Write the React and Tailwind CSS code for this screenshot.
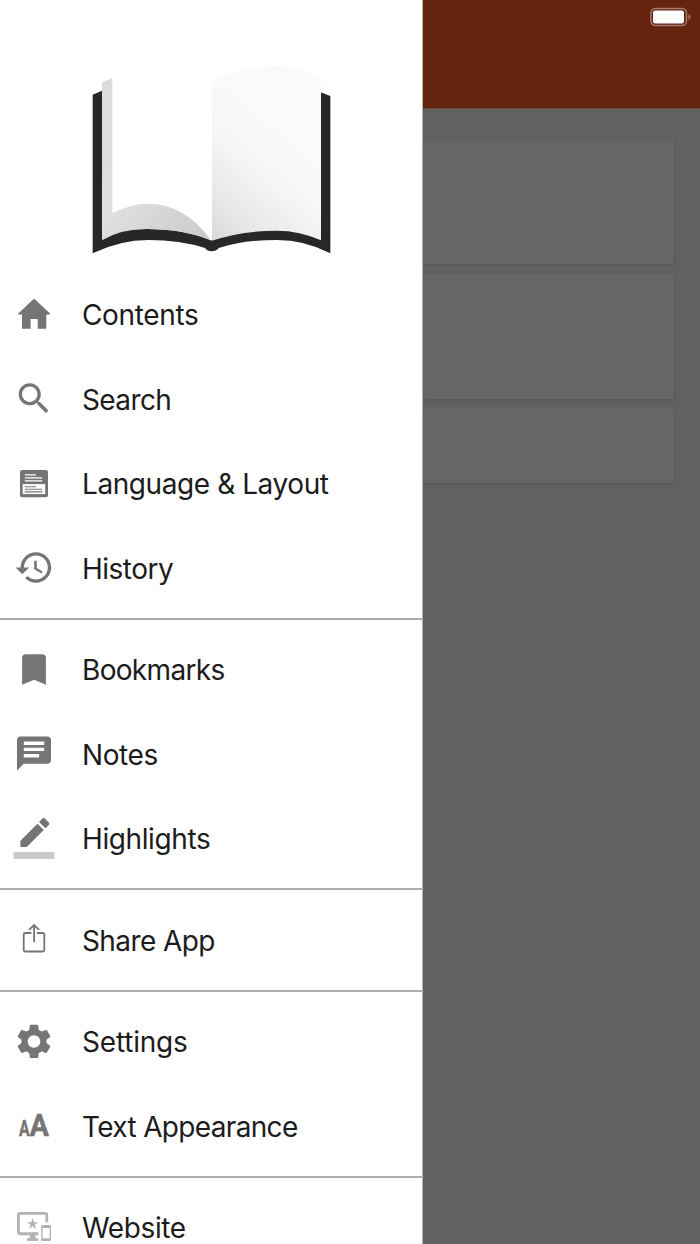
const GRAY = '#757575'

function Icon({ children, fill = GRAY }) {
  return (
    <svg viewBox="-24 -23.5 48 48" fill={fill} className="h-12 w-12 shrink-0">
      {children}
    </svg>
  )
}

function Glyph({ d, fill, transform = 'translate(-20.4 -20.4) scale(1.7)' }) {
  return (
    <Icon fill={fill}>
      <path d={d} transform={transform} />
    </Icon>
  )
}

const icons = {
  home: <Glyph transform="" d="M0.1-15.4Q.8-15.4 1.4-14.8L16.3-.8Q16.5 0 15.4 0H12.3V14.2H3.7V4.6H-3.4V14.2H-12V0H-15.2Q-16.3 0-16-.8L-1.2-14.8Q-.6-15.4 .1-15.4z" />,
  search: (
    <Glyph d="M15.5 14h-.79l-.28-.27C15.41 12.59 16 11.11 16 9.5 16 5.91 13.09 3 9.5 3S3 5.91 3 9.5 5.91 16 9.5 16c1.61 0 3.09-.59 4.23-1.57l.27.28v.79l5 4.99L20.49 19l-4.99-5zm-6 0C7.01 14 5 11.99 5 9.5S7.01 5 9.5 5 14 7.01 14 9.5 11.99 14 9.5 14z" />
  ),
  layout: (
    <Icon>
      <rect x="-14" y="-13.5" width="28" height="27.2" rx="2" />
      <path d="M-11.3.6H11.2V10.6H-11.3z" fill="#fff" />
      <path d="M-9.2-8.7H2M-9.2-5.7H8.2M-9.2-2.7H8.2" stroke="#fff" strokeWidth="1.3" />
      <path d="M-9.2 3.2H2M-9.2 5.8H8.2M-9.2 8.4H8.2" stroke={GRAY} strokeWidth="1.1" />
    </Icon>
  ),
  history: (
    <Glyph
      transform="translate(-20.2 -20.4) scale(1.7)"
      d="M13 3c-4.97 0-9 4.03-9 9H1l3.89 3.89.07.14L9 12H6c0-3.87 3.13-7 7-7s7 3.13 7 7-3.13 7-7 7c-1.93 0-3.68-.79-4.94-2.06l-1.42 1.42C8.27 19.99 10.51 21 13 21c4.97 0 9-4.03 9-9s-4.03-9-9-9zm-1 5v5l4.28 2.54.72-1.21-3.5-2.08V8H12z"
    />
  ),
  bookmark: <Glyph d="M17 3H7c-1.1 0-2 .9-2 2v16l7-3 7 3V5c0-1.1-.9-2-2-2z" />,
  notes: <Glyph d="M20 2H4c-1.1 0-1.99.9-1.99 2L2 22l4-4h14c1.1 0 2-.9 2-2V4c0-1.1-.9-2-2-2zM6 8.6h12v2H6v-2zm9 5.7H6v-2h9v2zm3-7.3H6V5h12v2z" />,
  highlight: (
    <Icon>
      <g transform="translate(-20.4 -20.4) scale(1.7)">
        <path d="M17.75 7L14 3.25l-10 10V17h3.75l10-10zm2.96-2.96c.39-.39.39-1.02 0-1.41L18.37.29c-.39-.39-1.02-.39-1.41 0L15 2.25 18.75 6l1.96-1.96z" />
        <path d="M0 20h24v4H0z" fill="#cacaca" />
      </g>
    </Icon>
  ),
  share: (
    <Icon fill="none">
      <path
        d="M-2.6-6.5H-8.8Q-10.3-6.5-10.3-5V10.5Q-10.3 12-8.8 12H8.8Q10.3 12 10.3 10.5V-5Q10.3-6.5 8.8-6.5H2.9M.1 2.8V-14.2M-5-9.6L.1-14.5L5.2-9.6"
        stroke={GRAY}
        strokeWidth="1.8"
      />
    </Icon>
  ),
  settings: (
    <Glyph
      transform="translate(-21 -20.8) scale(1.75 1.73)"
      d="M19.14 12.94c.04-.3.06-.61.06-.94 0-.32-.02-.64-.07-.94l2.03-1.58c.18-.14.23-.41.12-.61l-1.92-3.32c-.12-.22-.37-.29-.59-.22l-2.39.96c-.5-.38-1.03-.7-1.62-.94l-.36-2.54c-.04-.24-.24-.41-.48-.41h-3.84c-.24 0-.43.17-.47.41l-.36 2.54c-.59.24-1.13.57-1.62.94l-2.39-.96c-.22-.08-.47 0-.59.22L2.74 8.87c-.12.21-.08.47.12.61l2.03 1.58c-.05.3-.09.63-.09.94s.02.64.07.94l-2.03 1.58c-.18.14-.23.41-.12.61l1.92 3.32c.12.22.37.29.59.22l2.39-.96c.5.38 1.03.7 1.62.94l.36 2.54c.05.24.24.41.48.41h3.84c.24 0 .44-.17.47-.41l.36-2.54c.59-.24 1.13-.56 1.62-.94l2.39.96c.22.08.47 0 .59-.22l1.92-3.32c.12-.22.07-.47-.12-.61l-2.01-1.58zM12 15.6c-1.98 0-3.6-1.62-3.6-3.6s1.62-3.6 3.6-3.6 3.6 1.62 3.6 3.6-1.62 3.6-3.6 3.6z"
    />
  ),
  text: (
    <Icon>
      <text x="-15" y="10.2" fontFamily="Roboto, sans-serif" fontWeight="700" stroke={GRAY} strokeWidth="0.5">
        <tspan fontSize="22" textLength="10.6" lengthAdjust="spacingAndGlyphs">A</tspan>
        <tspan fontSize="32" textLength="19.4" lengthAdjust="spacingAndGlyphs">A</tspan>
      </text>
    </Icon>
  ),
  website: (
    <Glyph
      fill="#b3b3b3"
      transform="translate(-17 -17.5) scale(1.42 1.46)"
      d="M23 11.01L18 11c-.55 0-1 .45-1 1v9c0 .55.45 1 1 1h5c.55 0 1-.45 1-1v-9c0-.55-.45-.99-1-.99zM23 20h-5v-7h5v7zM20 2H2C.89 2 0 2.89 0 4v12c0 1.1.89 2 2 2h7v2H7v2h8v-2h-2v-2h2v-2H2V4h18v5h2V4c0-1.11-.9-2-2-2zm-8.03 7L11 6l-.97 3H7l2.47 1.76-.94 2.91 2.47-1.8 2.47 1.8-.94-2.91L15 9h-3.03z"
    />
  ),
}

const groups = [
  [
    ['home', 'Contents', 'tracking-[-0.35px]'],
    ['search', 'Search', 'tracking-[-0.6px]'],
    ['layout', 'Language & Layout', 'tracking-[-0.42px]'],
    ['history', 'History', 'tracking-[-0.5px]'],
  ],
  [
    ['bookmark', 'Bookmarks', 'tracking-[-0.68px]'],
    ['notes', 'Notes', 'tracking-[-0.4px]'],
    ['highlight', 'Highlights', 'tracking-[-0.4px]'],
  ],
  [['share', 'Share App', 'tracking-[-0.6px]']],
  [
    ['settings', 'Settings', 'tracking-[-0.2px]'],
    ['text', 'Text Appearance', 'tracking-[-0.66px]'],
  ],
  [['website', 'Website', 'tracking-[-0.38px]']],
]

function Book() {
  return (
    <svg viewBox="0 0 780 645" className="h-[215px] w-[260px]">
      <defs>
        <linearGradient id="left" gradientUnits="userSpaceOnUse" x1="66" y1="300" x2="330" y2="571">
          <stop offset="0" stopColor="#dcdcdc" />
          <stop offset="0.4" stopColor="#e0e0e0" />
          <stop offset="1" stopColor="#cccccc" />
        </linearGradient>
        <linearGradient id="right" gradientUnits="userSpaceOnUse" x1="380" y1="560" x2="640" y2="250">
          <stop offset="0" stopColor="#d9d9d9" />
          <stop offset="0.3" stopColor="#e9e9e9" />
          <stop offset="0.65" stopColor="#f6f6f6" />
          <stop offset="1" stopColor="#fafafa" />
        </linearGradient>
      </defs>
      <path
        d="M38 134L66 122V520H722V127L751 138V610Q675 570 590 570Q490 570 416 594Q408 604 395 604Q382 604 375 594Q300 570 205 570Q120 570 38 610z"
        fill="#272727"
      />
      <path d="M97 84Q260 30 398 92V571H392Q310 537 200 537L97 540z" fill="#fff" />
      <path d="M66 97L97 84V490Q150 461 205 461Q315 461 393 571Q310 537 200 537Q122 537 66 571z" fill="url(#left)" />
      <path d="M396 92Q500 47 602 47Q670 49 723 86V571Q660 542 590 542Q490 542 396 572z" fill="url(#right)" />
    </svg>
  )
}

function Drawer() {
  return (
    <nav className="w-[423px] shrink-0 overflow-hidden border-r border-[#b4b4b4] bg-white pt-[50px]">
      <div className="flex justify-center pr-0.5">
        <Book />
      </div>
      <div className="pt-[7.6px]">
        {groups.map((items, i) => (
          <div key={i} className="flex flex-col">
            {i > 0 && (
              <div className="flex h-[16.9px] items-center">
                <div className="h-[2px] w-full bg-[#ababab]" />
              </div>
            )}
            {items.map(([icon, label, tracking]) => (
              <div key={icon} className="flex h-[84.5px] items-center gap-6 pl-2.5">
                {icons[icon]}
                <span className={`whitespace-nowrap pt-[1px] text-[28px] leading-none text-[#1c1c1c] ${tracking}`}>{label}</span>
              </div>
            ))}
          </div>
        ))}
      </div>
    </nav>
  )
}

function Battery() {
  return (
    <svg viewBox="0 0 42 20" className="h-5 w-[42px]">
      <rect x="0.9" y="1.4" width="35.6" height="17.2" rx="4.5" fill="none" stroke="#a37b6f" strokeWidth="1.5" />
      <rect x="3" y="3.6" width="31" height="12.8" rx="2.2" fill="#fff" />
      <path d="M38.4 7.2Q40.4 8 40.4 10T38.4 12.8z" fill="#a37b6f" />
    </svg>
  )
}

function Card({ className }) {
  return <div className={`rounded-r-[2px] bg-[#666666] shadow-[1px_2px_2px_#5a5a5a] ${className}`} />
}

export default function App() {
  return (
    <div className="flex h-[1244px] w-[700px] overflow-hidden bg-white font-['Inter',sans-serif]">
      <Drawer />
      <main className="flex-1 bg-[#616161]">
        <header className="flex h-[109px] justify-end border-b border-[#6b4a40] bg-[#66230f] pr-2 pt-[7px]">
          <Battery />
        </header>
        <div className="flex flex-col gap-[10px] pr-[26px] pt-[31px]">
          <Card className="h-[124px]" />
          <Card className="h-[125px]" />
          <Card className="h-[74px]" />
        </div>
      </main>
    </div>
  )
}
